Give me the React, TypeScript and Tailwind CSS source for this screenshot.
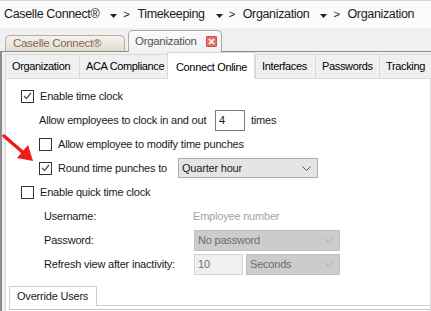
import React from "react";

const Caret = () => (
  <svg width="7" height="4" viewBox="0 0 7 4" className="ml-[11px] mt-[2px] shrink-0">
    <path d="M0 0H7L3.5 4Z" fill="#222" />
  </svg>
);

const Check = ({ checked }: { checked?: boolean }) => (
  <span className="flex h-[13px] w-[13px] shrink-0 items-center justify-center border border-[#333] bg-white">
    {checked && (
      <svg width="9" height="8" viewBox="0 0 9 8">
        <path d="M1 4L3.5 6.5L8 1" stroke="#555" strokeWidth="1.3" fill="none" />
      </svg>
    )}
  </span>
);

const Chevron = ({ color = "#555" }: { color?: string }) => (
  <svg width="9" height="5" viewBox="0 0 9 5">
    <path d="M0.5 0.5L4.5 4.5L8.5 0.5" stroke={color} strokeWidth="1" fill="none" />
  </svg>
);

const innerTabs = [
  { label: "Organization", w: "w-[74px]" },
  { label: "ACA Compliance", w: "w-[89px]" },
  { label: "Connect Online", w: "w-[88px]", active: true },
  { label: "Interfaces", w: "w-[60px]" },
  { label: "Passwords", w: "w-[64px]" },
  { label: "Tracking", w: "w-[60px]" },
];

export default function App() {
  return (
    <div className="relative flex h-[311px] w-[431px] flex-col overflow-hidden whitespace-nowrap bg-white font-['Liberation_Sans',Arial,sans-serif]">
      {/* breadcrumb */}
      <div className="flex h-[28px] shrink-0 items-center border-t border-[#d6d6d6] bg-[#fbfbfb] pl-[4px] text-[12.5px] tracking-[-0.35px] text-[#1a1a1a]">
        <span>Caselle Connect®</span>
        <Caret />
        <span className="ml-[6px] text-[11px]">&gt;</span>
        <span className="ml-[8px]">Timekeeping</span>
        <Caret />
        <span className="ml-[6px] text-[11px]">&gt;</span>
        <span className="ml-[8px]">Organization</span>
        <Caret />
        <span className="ml-[6px] text-[11px]">&gt;</span>
        <span className="ml-[8px]">Organization</span>
      </div>

      {/* document tabs */}
      <div className="flex h-[23px] shrink-0 items-end gap-[3px] bg-[#f0f0f0] pl-[5px] text-[11.5px] tracking-[-0.3px]">
        <div className="flex h-[16px] w-[120px] items-center rounded-t-[5px] border border-b-0 border-[#b8ad9e] bg-gradient-to-b from-[#f6f2ec] to-[#e4dccf] pl-[7px] text-[#7a6b5c]">
          Caselle Connect®
        </div>
        <div className="relative z-10 -mb-px flex h-[22px] w-[94px] items-center rounded-t-[5px] border border-b-0 border-[#a9a9a9] bg-gradient-to-b from-[#fafafa] to-[#f2f2f2] pl-[6px] text-[#555]">
          <span>Organization</span>
          <span className="ml-auto mr-[4px] flex h-[11px] w-[11px] items-center justify-center rounded-[1px] border border-[#c9504b] bg-[#e8706b]">
            <svg width="7" height="7" viewBox="0 0 7 7">
              <path d="M1 1L6 6M6 1L1 6" stroke="#fff" strokeWidth="1.6" />
            </svg>
          </span>
        </div>
      </div>

      {/* frame */}
      <div className="flex flex-1 flex-col border-l-2 border-t border-[#8c8c8c] bg-[#f0f0f0]">
        <div className="flex h-[26px] shrink-0 items-end pl-[3px] text-[11px] tracking-[-0.35px]">
          {innerTabs.map((t) =>
            t.active ? (
              <div
                key={t.label}
                className={`relative z-10 -mb-px -ml-px flex h-[27px] ${t.w} shrink-0 items-start border border-b-0 border-[#d9d9d9] bg-white pl-[8px] pt-[6px] text-black`}
              >
                {t.label}
              </div>
            ) : (
              <div
                key={t.label}
                className={`flex h-[24px] ${t.w} shrink-0 items-center border-l border-t border-[#d9d9d9] bg-[#f0f0f0] pl-[6px] text-black`}
              >
                {t.label}
              </div>
            )
          )}
        </div>

        {/* panel */}
        <div className="ml-[3px] flex w-[426px] flex-1 flex-col border border-b-0 border-[#d9d9d9] bg-white pt-[5px] text-[11px] tracking-[-0.2px] text-[#1a1a1a]">
          <div className="flex h-[24px] items-center pl-[15px]">
            <Check checked />
            <span className="ml-[6px]">Enable time clock</span>
          </div>
          <div className="flex h-[24px] items-center pl-[33px]">
            <span className="w-[176px]">Allow employees to clock in and out</span>
            <span className="flex h-[21px] w-[30px] items-center border border-[#7a7a7a] pl-[3px]">4</span>
            <span className="ml-[6px]">times</span>
          </div>
          <div className="flex h-[24px] items-center pl-[33px]">
            <Check />
            <span className="ml-[6px]">Allow employee to modify time punches</span>
          </div>
          <div className="flex h-[24px] items-center pl-[33px]">
            <Check checked />
            <span className="ml-[6px] w-[120px]">Round time punches to</span>
            <span className="flex h-[20px] w-[140px] items-center border border-[#acacac] bg-[#e5e5e5] pl-[3px] pr-[6px]">
              Quarter hour
              <span className="ml-auto">
                <Chevron />
              </span>
            </span>
          </div>
          <div className="flex h-[25px] items-center pl-[15px]">
            <Check />
            <span className="ml-[6px]">Enable quick time clock</span>
          </div>
          <div className="flex h-[23px] items-center pl-[38px]">
            <span className="w-[149px]">Username:</span>
            <span className="text-[#a3a3a3]">Employee number</span>
          </div>
          <div className="flex h-[25px] items-center pl-[38px]">
            <span className="w-[150px]">Password:</span>
            <span className="flex h-[21px] w-[146px] items-center border border-[#bfbfbf] bg-[#cccccc] pl-[3px] pr-[6px] text-[#6d6d6d]">
              No password
              <span className="ml-auto">
                <Chevron color="#aaa" />
              </span>
            </span>
          </div>
          <div className="flex h-[23px] items-center pl-[38px]">
            <span className="w-[150px]">Refresh view after inactivity:</span>
            <span className="flex h-[21px] w-[49px] items-center border border-[#d4d4d4] bg-[#f0f0f0] pl-[3px] text-[#6d6d6d]">10</span>
            <span className="ml-[3px] flex h-[21px] w-[94px] items-center border border-[#bfbfbf] bg-[#cccccc] pl-[3px] pr-[6px] text-[#6d6d6d]">
              Seconds
              <span className="ml-auto">
                <Chevron color="#aaa" />
              </span>
            </span>
          </div>

          <div className="mt-[10px] flex items-end">
            <div className="ml-[3px] flex h-[20px] w-[88px] items-center border border-b-0 border-[#d0d0d0] bg-white pl-[7px]">
              Override Users
            </div>
            <div className="flex-1 border-b border-[#d0d0d0]" />
          </div>
          <div className="ml-[3px] h-[4px] border-b border-l border-[#c4c4c4]" />
        </div>
      </div>

      {/* red arrow */}
      <svg className="absolute left-0 top-[130px]" width="40" height="36" viewBox="0 130 40 36">
        <line x1="4" y1="136" x2="23" y2="152.5" stroke="#ee1c1c" strokeWidth="3.5" strokeLinecap="round" />
        <polygon points="33,161 17,158 28,145" fill="#ee1c1c" />
      </svg>
    </div>
  );
}
